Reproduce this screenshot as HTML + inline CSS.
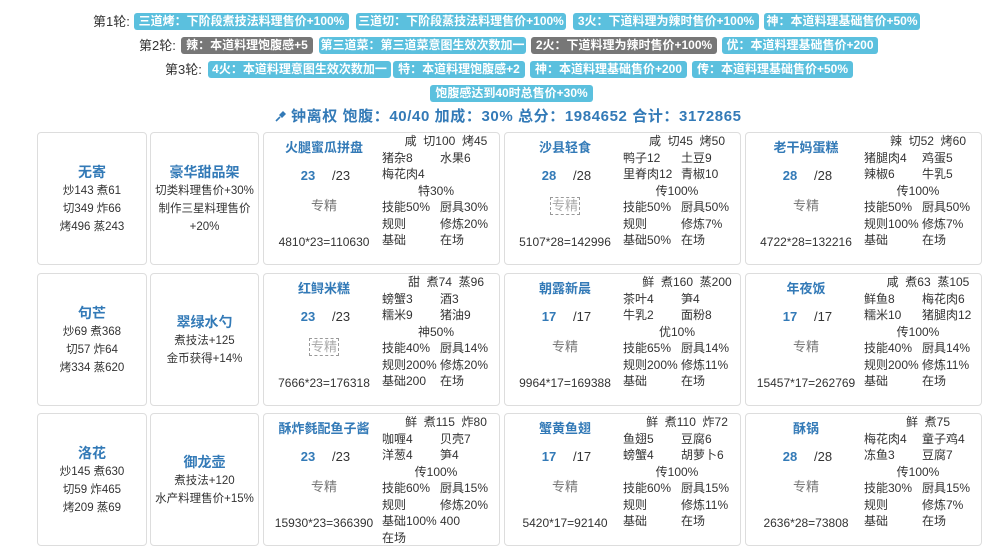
<!DOCTYPE html>
<html><head><meta charset="utf-8"><style>
*{margin:0;padding:0;box-sizing:border-box}
body{width:1000px;height:559px;background:#fff;font-family:"Liberation Sans","Noto Sans CJK SC",sans-serif;font-size:12px;color:#333;position:relative;overflow:hidden}
.lb{position:absolute;height:17px;line-height:17px;border-radius:3px;background:#5bc0de;color:#fff;font-weight:bold;font-size:12px;text-align:center;white-space:nowrap;overflow:hidden}
.gr{background:#777}
.rl{position:absolute;font-size:13px;color:#333;line-height:17px}
.tot{position:absolute;left:275px;top:107px;font-size:15px;letter-spacing:0.6px;font-weight:bold;color:#337ab7;white-space:nowrap;line-height:20px}
.card{position:absolute;border:1px solid #ddd;border-radius:4px;height:133px;background:#fff}
.c1{width:110px}.c2{width:109px}.d{width:237px}
.cc{display:flex;flex-direction:column;justify-content:center;align-items:center;height:100%;line-height:18px;text-align:center;font-size:11.5px}
.nm{font-size:14px;font-weight:bold;color:#337ab7;line-height:20px}
.d .t{position:absolute;left:0;width:120px;top:5px;text-align:center;font-size:13px;font-weight:bold;color:#337ab7;line-height:20px;white-space:nowrap}
.d .n{position:absolute;left:34px;width:20px;top:33px;text-align:center;font-size:13px;font-weight:bold;color:#337ab7;line-height:20px}
.d .m{position:absolute;left:68px;top:33px;font-size:13px;line-height:20px}
.d .z{position:absolute;left:0;width:120px;top:63px;text-align:center;font-size:13px;color:#777;line-height:20px}
.d .z span{display:inline-block;line-height:16px}
.d .z .bx{border:1px dashed #999;color:#aaa;padding:0 1px}
.d .f{position:absolute;left:0;width:120px;top:100px;text-align:center;font-size:12px;line-height:18px;white-space:nowrap}
.d .r{position:absolute;left:118px;width:118px;font-size:12px;line-height:16.5px;white-space:nowrap}
.d .r div{height:16.5px}
.d .r .h{text-align:center;padding-left:10px}
.d .r .c{text-align:center;padding-right:10px}
.d .r span{display:inline-block;width:58px}
</style></head><body>

<div class="rl" style="left:93px;top:13px">第1轮:</div>
<div class="lb" style="left:134px;top:13px;width:215px">三道烤：下阶段煮技法料理售价+100%</div>
<div class="lb" style="left:356px;top:13px;width:210px">三道切：下阶段蒸技法料理售价+100%</div>
<div class="lb" style="left:573px;top:13px;width:186px">3火：下道料理为辣时售价+100%</div>
<div class="lb" style="left:764px;top:13px;width:156px">神：本道料理基础售价+50%</div>

<div class="rl" style="left:139px;top:37px">第2轮:</div>
<div class="lb gr" style="left:181px;top:37px;width:132px">辣：本道料理饱腹感+5</div>
<div class="lb" style="left:319px;top:37px;width:207px">第三道菜：第三道菜意图生效次数加一</div>
<div class="lb gr" style="left:531px;top:37px;width:186px">2火：下道料理为辣时售价+100%</div>
<div class="lb" style="left:722px;top:37px;width:156px">优：本道料理基础售价+200</div>

<div class="rl" style="left:165px;top:61px">第3轮:</div>
<div class="lb" style="left:208px;top:61px;width:183px">4火：本道料理意图生效次数加一</div>
<div class="lb" style="left:393px;top:61px;width:132px">特：本道料理饱腹感+2</div>
<div class="lb" style="left:530px;top:61px;width:157px">神：本道料理基础售价+200</div>
<div class="lb" style="left:692px;top:61px;width:161px">传：本道料理基础售价+50%</div>

<div class="lb" style="left:430px;top:85px;width:163px">饱腹感达到40时总售价+30%</div>

<div class="tot"><svg width="12" height="12" viewBox="0 0 12 12" style="vertical-align:-1px;margin-right:4px"><path d="M1 11 L5 7" stroke="#337ab7" stroke-width="1.6"/><path d="M4 5 L7 8 L11 4 L8 1 Z" fill="#337ab7"/></svg>钟离权 饱腹：40/40 加成：30% 总分：1984652 合计：3172865</div>

<!-- row 1 -->
<div class="card c1" style="left:37px;top:132px"><div class="cc"><div class="nm">无寄</div><div>炒143 煮61</div><div>切349 炸66</div><div>烤496 蒸243</div></div></div>
<div class="card c2" style="left:150px;top:132px"><div class="cc"><div class="nm">豪华甜品架</div><div>切类料理售价+30%</div><div>制作三星料理售价</div><div>+20%</div></div></div>
<div class="card d" style="left:263px;top:132px"><div class="t">火腿蜜瓜拼盘</div><div class="n">23</div><div class="m">/23</div><div class="z"><span>专精</span></div><div class="f">4810*23=110630</div>
<div class="r" style="top:0"><div class="h">咸 &nbsp;切100 &nbsp;烤45</div><div><span>猪杂8</span><span>水果6</span></div><div><span>梅花肉4</span><span></span></div><div class="c">特30%</div><div><span>技能50%</span><span>厨具30%</span></div><div><span>规则</span><span>修炼20%</span></div><div><span>基础</span><span>在场</span></div></div></div>
<div class="card d" style="left:504px;top:132px"><div class="t">沙县轻食</div><div class="n">28</div><div class="m">/28</div><div class="z"><span class="bx">专精</span></div><div class="f">5107*28=142996</div>
<div class="r" style="top:0"><div class="h">咸 &nbsp;切45 &nbsp;烤50</div><div><span>鸭子12</span><span>土豆9</span></div><div><span>里脊肉12</span><span>青椒10</span></div><div class="c">传100%</div><div><span>技能50%</span><span>厨具50%</span></div><div><span>规则</span><span>修炼7%</span></div><div><span>基础50%</span><span>在场</span></div></div></div>
<div class="card d" style="left:745px;top:132px"><div class="t">老干妈蛋糕</div><div class="n">28</div><div class="m">/28</div><div class="z"><span>专精</span></div><div class="f">4722*28=132216</div>
<div class="r" style="top:0"><div class="h">辣 &nbsp;切52 &nbsp;烤60</div><div><span>猪腿肉4</span><span>鸡蛋5</span></div><div><span>辣椒6</span><span>牛乳5</span></div><div class="c">传100%</div><div><span>技能50%</span><span>厨具50%</span></div><div><span>规则100%</span><span>修炼7%</span></div><div><span>基础</span><span>在场</span></div></div></div>

<!-- row 2 -->
<div class="card c1" style="left:37px;top:273px"><div class="cc"><div class="nm">句芒</div><div>炒69 煮368</div><div>切57 炸64</div><div>烤334 蒸620</div></div></div>
<div class="card c2" style="left:150px;top:273px"><div class="cc"><div class="nm">翠绿水勺</div><div>煮技法+125</div><div>金币获得+14%</div></div></div>
<div class="card d" style="left:263px;top:273px"><div class="t">红鲟米糕</div><div class="n">23</div><div class="m">/23</div><div class="z"><span class="bx">专精</span></div><div class="f">7666*23=176318</div>
<div class="r" style="top:0"><div class="h">甜 &nbsp;煮74 &nbsp;蒸96</div><div><span>螃蟹3</span><span>酒3</span></div><div><span>糯米9</span><span>猪油9</span></div><div class="c">神50%</div><div><span>技能40%</span><span>厨具14%</span></div><div><span>规则200%</span><span>修炼20%</span></div><div><span>基础200</span><span>在场</span></div></div></div>
<div class="card d" style="left:504px;top:273px"><div class="t">朝露新晨</div><div class="n">17</div><div class="m">/17</div><div class="z"><span>专精</span></div><div class="f">9964*17=169388</div>
<div class="r" style="top:0"><div class="h">鲜 &nbsp;煮160 &nbsp;蒸200</div><div><span>茶叶4</span><span>笋4</span></div><div><span>牛乳2</span><span>面粉8</span></div><div class="c">优10%</div><div><span>技能65%</span><span>厨具14%</span></div><div><span>规则200%</span><span>修炼11%</span></div><div><span>基础</span><span>在场</span></div></div></div>
<div class="card d" style="left:745px;top:273px"><div class="t">年夜饭</div><div class="n">17</div><div class="m">/17</div><div class="z"><span>专精</span></div><div class="f">15457*17=262769</div>
<div class="r" style="top:0"><div class="h">咸 &nbsp;煮63 &nbsp;蒸105</div><div><span>鲜鱼8</span><span>梅花肉6</span></div><div><span>糯米10</span><span>猪腿肉12</span></div><div class="c">传100%</div><div><span>技能40%</span><span>厨具14%</span></div><div><span>规则200%</span><span>修炼11%</span></div><div><span>基础</span><span>在场</span></div></div></div>

<!-- row 3 -->
<div class="card c1" style="left:37px;top:413px"><div class="cc"><div class="nm">洛花</div><div>炒145 煮630</div><div>切59 炸465</div><div>烤209 蒸69</div></div></div>
<div class="card c2" style="left:150px;top:413px"><div class="cc"><div class="nm">御龙壶</div><div>煮技法+120</div><div>水产料理售价+15%</div></div></div>
<div class="card d" style="left:263px;top:413px"><div class="t">酥炸毵配鱼子酱</div><div class="n">23</div><div class="m">/23</div><div class="z"><span>专精</span></div><div class="f">15930*23=366390</div>
<div class="r" style="top:0"><div class="h">鲜 &nbsp;煮115 &nbsp;炸80</div><div><span>咖喱4</span><span>贝壳7</span></div><div><span>洋葱4</span><span>笋4</span></div><div class="c">传100%</div><div><span>技能60%</span><span>厨具15%</span></div><div><span>规则</span><span>修炼20%</span></div><div><span>基础100%</span><span>400</span></div><div><span>在场</span></div></div></div>
<div class="card d" style="left:504px;top:413px"><div class="t">蟹黄鱼翅</div><div class="n">17</div><div class="m">/17</div><div class="z"><span>专精</span></div><div class="f">5420*17=92140</div>
<div class="r" style="top:0"><div class="h">鲜 &nbsp;煮110 &nbsp;炸72</div><div><span>鱼翅5</span><span>豆腐6</span></div><div><span>螃蟹4</span><span>胡萝卜6</span></div><div class="c">传100%</div><div><span>技能60%</span><span>厨具15%</span></div><div><span>规则</span><span>修炼11%</span></div><div><span>基础</span><span>在场</span></div></div></div>
<div class="card d" style="left:745px;top:413px"><div class="t">酥锅</div><div class="n">28</div><div class="m">/28</div><div class="z"><span>专精</span></div><div class="f">2636*28=73808</div>
<div class="r" style="top:0"><div class="h">鲜 &nbsp;煮75</div><div><span>梅花肉4</span><span>童子鸡4</span></div><div><span>冻鱼3</span><span>豆腐7</span></div><div class="c">传100%</div><div><span>技能30%</span><span>厨具15%</span></div><div><span>规则</span><span>修炼7%</span></div><div><span>基础</span><span>在场</span></div></div></div>

</body></html>
